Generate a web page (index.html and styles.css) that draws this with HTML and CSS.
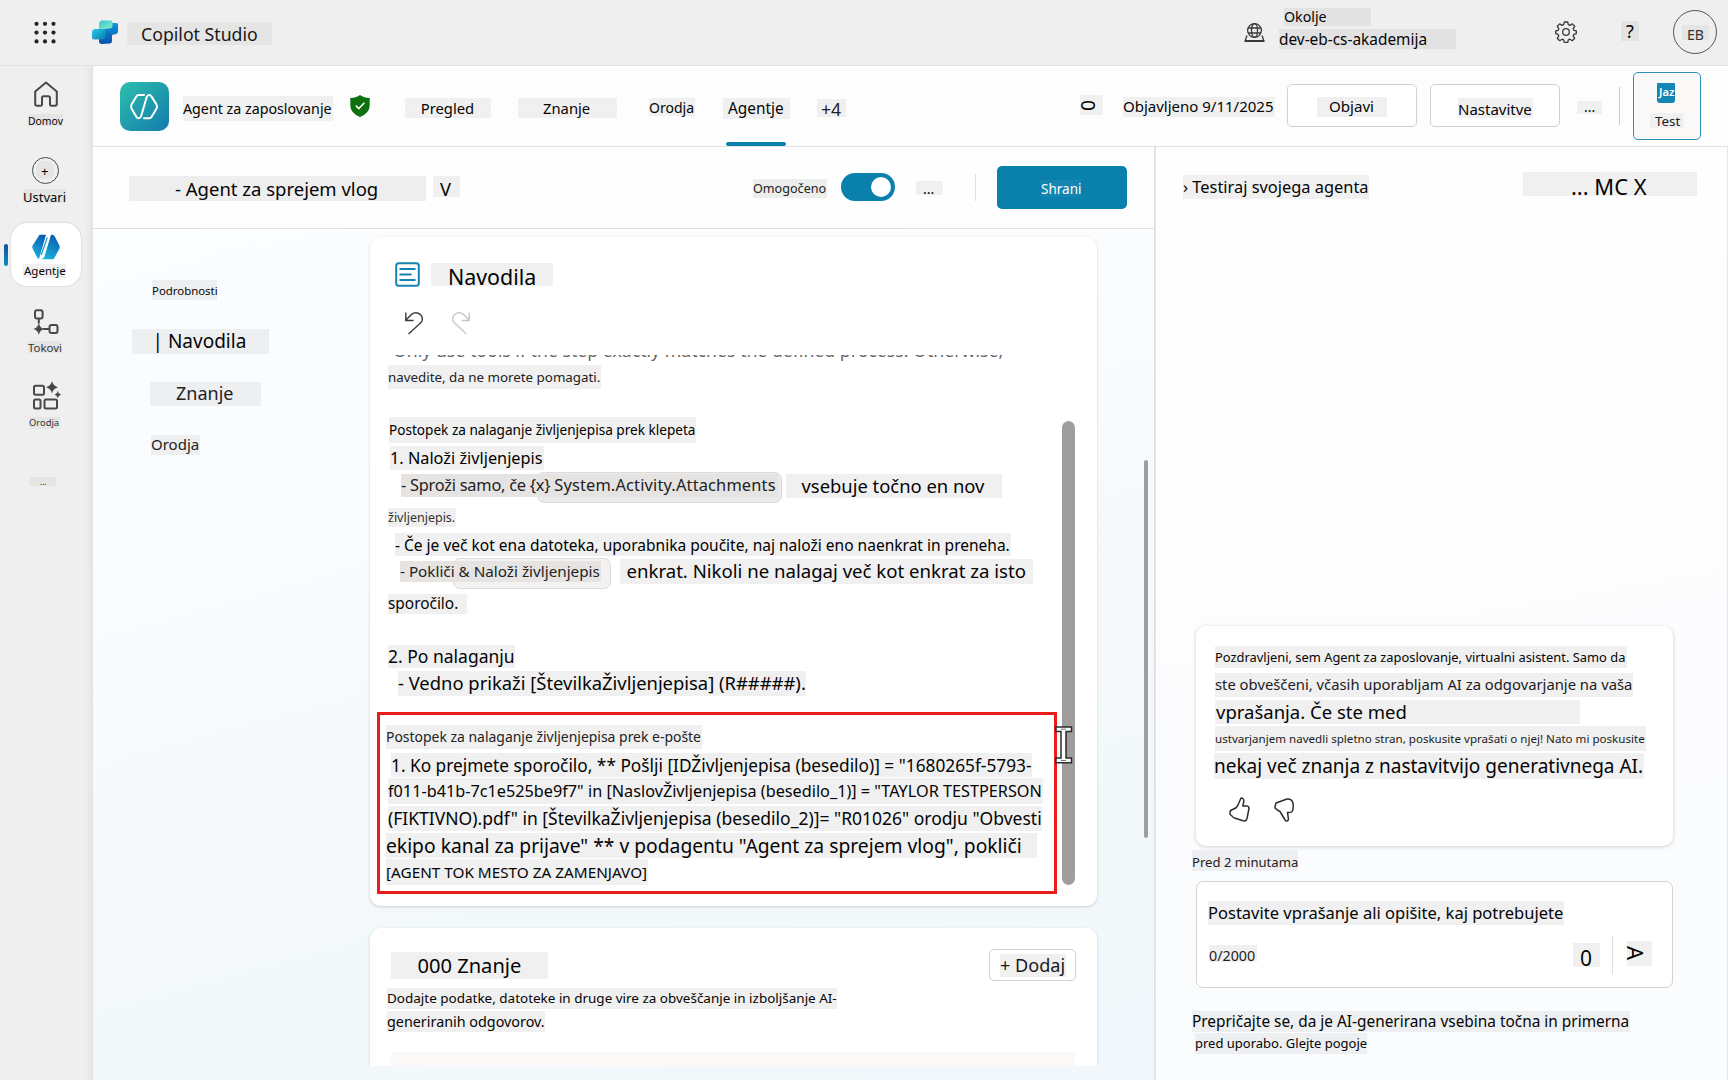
FILE: index.html
```html
<!DOCTYPE html>
<html lang="sl">
<head>
<meta charset="utf-8">
<title>Copilot Studio</title>
<link rel="stylesheet" href="styles.css">
</head>
<body>
<header class="topbar">
  <svg class="waffle" viewBox="0 0 22 24" fill="#242424"><circle cx="2.5" cy="2.8" r="2.1"/><circle cx="11" cy="2.8" r="2.1"/><circle cx="19.5" cy="2.8" r="2.1"/><circle cx="2.5" cy="11.6" r="2.1"/><circle cx="11" cy="11.6" r="2.1"/><circle cx="19.5" cy="11.6" r="2.1"/><circle cx="2.5" cy="20.4" r="2.1"/><circle cx="11" cy="20.4" r="2.1"/><circle cx="19.5" cy="20.4" r="2.1"/></svg>
  <svg class="brand-logo" viewBox="0 0 26 24">
    <defs>
      <linearGradient id="lg1" x1="0" y1="0" x2="1" y2="1"><stop offset="0" stop-color="#36c4d8"/><stop offset="1" stop-color="#8cf0c0"/></linearGradient>
      <linearGradient id="lg2" x1="0" y1="0" x2="1" y2="1"><stop offset="0" stop-color="#28c8e8"/><stop offset="1" stop-color="#0b7fae"/></linearGradient>
      <linearGradient id="lg3" x1="0" y1="0" x2="0" y2="1"><stop offset="0" stop-color="#1098e0"/><stop offset="1" stop-color="#0a4fa8"/></linearGradient>
    </defs>
    <path d="M18 3h6.5q1.500 0 1.500 1.500v7q0 2-2 2.500l-4 1v6q0 2-2 2.500l-8 .5q-3 0-3-2.500V13z" fill="url(#lg3)"/>
    <path d="M2.500 9h9.500q1.500 0 1.500 1.500v6.500q0 2-2 2.200L2 19.500q-2 0-2-2v-5.500q0-2.500 2.500-3z" fill="url(#lg2)"/>
    <path d="M10 .5h9q1.500 0 1.500 1.500v4q0 2-2 2.300L13.500 9H7V4q0-3 3-3.500z" fill="url(#lg1)"/>
  </svg>
  <span class="tag on-grey t-brand">Copilot Studio</span>
  <div class="top-right">
    <svg class="env-icon" viewBox="0 0 21 19" fill="none" stroke="#3a3a3a" stroke-width="1.300"><circle cx="10.500" cy="7.500" r="6.900"/><ellipse cx="10.500" cy="7.500" rx="3" ry="6.900"/><path d="M4 5h13M4 10h13M3 12.500L1 18.200h19l-2-5.700"/><path d="M1 18h19" stroke-width="2"/></svg>
    <div class="env">
      <span class="tag on-grey t-env1">Okolje</span>
      <span class="tag on-grey t-env2">dev-eb-cs-akademija</span>
    </div>
    <svg class="gear" viewBox="0 0 22 22" fill="none" stroke="#3a3a3a" stroke-width="1.300" stroke-linejoin="round"><circle cx="11" cy="11" r="3.300"/><path d="M9.300 1h3.400l.6 2.700 1.600.7 2.400-1.500 2.400 2.400-1.500 2.400.7 1.600 2.400.6v2.800l-2.400.6-.7 1.600 1.500 2.400-2.400 2.400-2.400-1.500-1.600.7-.6 2.600H9.300l-.6-2.600-1.600-.7-2.400 1.500-2.400-2.400 1.500-2.400-.7-1.600L.7 12.700V9.900l2.400-.6.7-1.600-1.500-2.400 2.400-2.400 2.400 1.500 1.600-.7z"/></svg>
    <span class="tag on-grey t-help">?</span>
    <div class="avatar"><span class="tag on-grey t-eb">EB</span></div>
  </div>
</header>

<div class="shell">
  <nav class="rail">
    <svg class="ic-home" viewBox="0 0 26 26" fill="none" stroke="#484848" stroke-width="2" stroke-linejoin="round"><path d="M2.200 10.500L13 1.500l10.800 9V23q0 1.800-1.800 1.800h-3.600q-1.400 0-1.400-1.400V17q0-1.800-1.800-1.800h-4.400Q9 15.200 9 17v6.400q0 1.400-1.400 1.400H4q-1.800 0-1.800-1.800z"/></svg>
    <span class="tag on-grey t-home">Domov</span>
    <div class="create"><span class="tag on-grey t-plus">+</span></div>
    <span class="tag on-grey t-create">Ustvari</span>
    <div class="rail-active">
      <svg class="ic-agents" viewBox="0 0 28 26">
        <defs><linearGradient id="ag" x1=".7" y1="0" x2=".3" y2="1"><stop offset="0" stop-color="#0b5cb0"/><stop offset="1" stop-color="#18b4dc"/></linearGradient></defs>
        <path d="M7.500.8H14L7 25q-1.500-.5-2.200-2L.6 14.500q-.6-1.500 0-3z" fill="url(#ag)"/>
        <path d="M14 25.200h6.500q1.200 0 1.900-1.200l5-9.500q.6-1.500 0-3L23 3Q22 .8 20 .8h-1L12.500 22.500q-.6 2.200-3.500 2.700z" fill="url(#ag)"/>
        <path d="M17.500 2L10 24" stroke="#fff" stroke-width="1.300"/><path d="M15.300 3.500L9.200 21" stroke="#18a0d8" stroke-width="1.200"/>
      </svg>
      <span class="tag t-agents">Agentje</span>
    </div>
    <svg class="ic-flows" viewBox="0 0 26 26" fill="none" stroke="#484848" stroke-width="2"><rect x="2" y="1.200" width="7.600" height="8.300" rx="2"/><rect x="16.500" y="16" width="8" height="8" rx="2"/><path d="M5.800 9.500v5M10 20h6.500"/><path d="M5.800 14q1 5 5.500 6-4.500 1-5.500 6-1-5-5.500-6 4.500-1 5.500-6z" fill="#484848" stroke="none"/></svg>
    <span class="tag on-grey t-flows">Tokovi</span>
    <svg class="ic-tools" viewBox="0 0 29 29" fill="none" stroke="#484848" stroke-width="2"><rect x="2" y="4.800" width="10" height="9" rx="1.500"/><rect x="2" y="18.500" width="6.500" height="9" rx="1.500"/><rect x="12.500" y="18.500" width="12.500" height="9" rx="1.500"/><path d="M20 0q1 5 6 6.200-5 1.300-6 6.300-1-5-6-6.300Q19 5 20 0zM25.800 10q.5 3 3.200 3.700-2.700.6-3.200 3.600-.5-3-3.200-3.600 2.700-.7 3.200-3.700z" fill="#484848" stroke="none"/></svg>
    <span class="tag on-grey t-tools">Orodja</span>
    <span class="tag on-grey t-more">...</span>
  </nav>

  <main class="main">
    <div class="agentbar">
      <svg class="agent-logo" viewBox="0 0 49 49">
        <defs><linearGradient id="al" x1="0" y1="0" x2="1" y2="1"><stop offset="0" stop-color="#2cc0ac"/><stop offset="1" stop-color="#1479ac"/></linearGradient></defs>
        <rect width="49" height="49" rx="10" fill="url(#al)"/>
        <path d="M24 13h-5.500q-1.300 0-2 1.200L11.500 22.500q-1 2 0 4L16.500 35q.8 1.400 2.200 1.200 1.800-.2 2.400-2L26.700 15q.7-2 2.500-2 1.400 0 2.200 1.400l5.200 8.200q1 2 0 4L31.500 35q-.8 1.300-2.300 1.300H24" fill="none" stroke="#fff" stroke-width="2" stroke-linecap="round" stroke-linejoin="round"/>
      </svg>
      <span class="tag t-agentname">Agent za zaposlovanje</span>
      <svg class="shield" viewBox="0 0 20 22"><path d="M10 0q4 3 9.700 3v7.500Q19.700 18 10 22 .3 18 .3 10.500V3Q6 3 10 0z" fill="#0e700e"/><path d="M5.800 10.600l3 3 5.600-5.800" fill="none" stroke="#fff" stroke-width="1.500"/></svg>
      <span class="tag t-tab1">Pregled</span>
      <span class="tag t-tab2">Znanje</span>
      <span class="tag t-tab3">Orodja</span>
      <span class="tag t-tab4">Agentje</span>
      <span class="tag t-tab5">+4</span>
      <span class="tag t-eye"><span class="turn">0</span></span>
      <span class="tag t-published">Objavljeno 9/11/2025</span>
      <div class="btn btn-publish"><span class="tag t-publish">Objavi</span></div>
      <div class="btn btn-settings"><span class="tag t-settings">Nastavitve</span></div>
      <span class="tag t-bardots">...</span>
      <i class="bar-rule"></i>
      <div class="btn-test"><span class="tag t-jaz">Jaz</span><span class="tag t-test">Test</span></div>
    </div>

    <div class="split">
      <section class="work">
        <div class="subbar">
          <span class="tag t-subname">- Agent za sprejem vlog</span>
          <span class="tag t-v">V</span>
          <span class="tag t-enabled">Omogočeno</span>
          <div class="toggle"><i></i></div>
          <span class="tag t-subdots">...</span>
          <i class="sub-rule"></i>
          <div class="btn-save"><span class="tag t-save">Shrani</span></div>
        </div>
        <div class="canvas">
          <div class="toc">
            <span class="tag on-blue t-toc1">Podrobnosti</span>
            <span class="tag on-blue t-toc2">| Navodila</span>
            <span class="tag on-blue t-toc3">Znanje</span>
            <span class="tag on-blue t-toc4">Orodja</span>
          </div>
          <div class="cards">
            <article class="card card-main">
              <div class="card-head">
                <svg class="ic-doc" viewBox="0 0 25 25" fill="none" stroke="#1485b0" stroke-width="2" stroke-linecap="round"><rect x="1.200" y="1.200" width="22.600" height="22.600" rx="2.500"/><path d="M5.200 7h14.600M5.200 12.500h10.600M5.200 18h14.600"/></svg>
                <span class="tag t-cardtitle">Navodila</span>
              </div>
              <div class="undo-row">
                <svg viewBox="0 0 18 23" fill="none" stroke="#3c3c3c" stroke-width="1.400"><path d="M.8.500v8h7.800M1 8l5.500-5.600Q11-1 15.500 2.600q3.500 4 .5 8L3.500 22"/></svg>
                <svg class="redo" viewBox="0 0 18 23" fill="none" stroke="#c8c8c8" stroke-width="1.400"><path d="M17.200.500v8H9.400M17 8l-5.500-5.600Q7-1 2.500 2.600q-3.500 4-.5 8L14.500 22"/></svg>
              </div>
              <div class="editor">
                <div class="lines">
                  <div class="cutoff"><span class="tag t-cut">Only use tools if the step exactly matches the defined process. Otherwise,</span></div>
                  <span class="tag t-l1">navedite, da ne morete pomagati.</span>
                  <span class="tag t-l2">Postopek za nalaganje življenjepisa prek klepeta</span>
                  <span class="tag t-l3">1. Naloži življenjepis</span>
                  <div class="row row-a">
                    <span class="tag chip t-l4"><span class="tight">- Sproži samo, če {x} </span><span class="loose">System.Activity.Attachments</span></span>
                    <span class="tag t-l4b">vsebuje točno en nov</span>
                  </div>
                  <span class="tag t-l5">življenjepis.</span>
                  <span class="tag t-l6">- Če je več kot ena datoteka, uporabnika poučite, naj naloži eno naenkrat in preneha.</span>
                  <div class="row row-b">
                    <span class="tag chip t-l7">- Pokliči &amp; Naloži življenjepis</span>
                    <span class="tag t-l7b">enkrat. Nikoli ne nalagaj več kot enkrat za isto</span>
                  </div>
                  <span class="tag t-l8">sporočilo.</span>
                  <span class="tag t-l9">2. Po nalaganju</span>
                  <span class="tag t-l10">- Vedno prikaži [ŠtevilkaŽivljenjepisa] (R#####).</span>
                  <div class="marked">
                    <span class="tag t-m1">Postopek za nalaganje življenjepisa prek e-pošte</span>
                    <span class="tag t-m2">1. Ko prejmete sporočilo, ** Pošlji [IDŽivljenjepisa (besedilo)] = "1680265f-5793-</span>
                    <span class="tag t-m3">f011-b41b-7c1e525be9f7" in [NaslovŽivljenjepisa (besedilo_1)] = "TAYLOR TESTPERSON</span>
                    <span class="tag t-m4">(FIKTIVNO).pdf" in [ŠtevilkaŽivljenjepisa (besedilo_2)]= "R01026" orodju "Obvesti</span>
                    <span class="tag t-m5">ekipo kanal za prijave" ** v podagentu "Agent za sprejem vlog", pokliči</span>
                    <span class="tag t-m6">[AGENT TOK MESTO ZA ZAMENJAVO]</span>
                  </div>
                </div>
                <i class="thumb"></i>
                <svg class="ibeam" viewBox="0 0 18 38"><path d="M1 1h15.500v4.500H11V32h5.500v4.800H1V32h5V5.500H1z" fill="#fff" stroke="#2a2a2a" stroke-width="1.500"/><path d="M6 3.200h5M6 34.500h5" stroke="#777" stroke-width="1"/></svg>
              </div>
            </article>
            <article class="card card-know">
              <div class="know-head">
                <span class="tag t-know">000 Znanje</span>
                <div class="btn-add"><span class="tag t-add">+ Dodaj</span></div>
              </div>
              <span class="tag t-k1">Dodajte podatke, datoteke in druge vire za obveščanje in izboljšanje AI-</span>
              <span class="tag t-k2">generiranih odgovorov.</span>
              <div class="know-strip"></div>
            </article>
          </div>
          <i class="page-thumb"></i>
        </div>
      </section>

      <aside class="chat">
        <div class="chat-head">
          <span class="tag t-chat">› Testiraj svojega agenta</span>
          <span class="tag t-mcx">... MC X</span>
        </div>
        <div class="bubble">
          <span class="tag t-b1">Pozdravljeni, sem Agent za zaposlovanje, virtualni asistent. Samo da</span>
          <span class="tag t-b2">ste obveščeni, včasih uporabljam AI za odgovarjanje na vaša</span>
          <span class="tag t-b3">vprašanja. Če ste med</span>
          <span class="tag t-b4">ustvarjanjem navedli spletno stran, poskusite vprašati o njej! Nato mi poskusite</span>
          <span class="tag t-b5">nekaj več znanja z nastavitvijo generativnega AI.</span>
          <div class="votes">
            <svg viewBox="0 0 21 25" fill="none" stroke="#2e2e2e" stroke-width="1.500" stroke-linejoin="round"><path d="M12 1q3 0 2.800 3.500L13.800 9h4.400q2 .3 1.800 2.500L18 21.500q-.8 3-4 2.300L5.500 21Q4 20.500 3.500 19.500L1.200 17.500Q.2 13.500 3.500 12.500 7.500 11.500 9 8z"/></svg>
            <svg class="down" viewBox="0 0 20 24" fill="none" stroke="#2e2e2e" stroke-width="1.500" stroke-linejoin="round"><path d="M2 5Q1 8 1 10q2 2 5 3.500L10.500 21q.8 2.300 2.500 2 1.700-.3 1.300-3L13.500 14.500q4 .5 5-1.500 1.200-4 .3-8.500Q17.500.5 13 1z"/></svg>
          </div>
        </div>
        <span class="tag on-blue t-time">Pred 2 minutama</span>
        <div class="ask">
          <span class="tag t-ask">Postavite vprašanje ali opišite, kaj potrebujete</span>
          <div class="ask-row">
            <span class="tag t-count">0/2000</span>
            <span class="tag t-mic">0</span>
            <i class="ask-rule"></i>
            <span class="tag t-send"><span class="turn">A</span></span>
          </div>
        </div>
        <span class="tag on-blue t-n1">Prepričajte se, da je AI-generirana vsebina točna in primerna</span>
        <span class="tag on-blue t-n2">pred uporabo. Glejte pogoje</span>
      </aside>
    </div>
  </main>
</div>
</body>
</html>
```
FILE: styles.css
```css
* { box-sizing: border-box; }
body {
  margin: 0; width: 1728px; height: 1080px; overflow: hidden;
  background: #efefef; color: #050505;
  font-family: "Noto Sans", "Open Sans", sans-serif;
}
svg { display: block; flex: none; }
i { display: block; flex: none; }

/* Text label: --w/--h box, --f font size, --b baseline from the top, --p inset */
.tag {
  --p: 0px;
  display: block; flex: none;
  width: var(--w); height: var(--h); padding-left: var(--p);
  font-size: var(--f);
  line-height: calc(2 * (var(--b) + .7px - .388em));
  white-space: pre;
  background: #f0f0f0;
}
.on-grey { background: #e5e5e5; }
.on-blue { background: #eeeff1; }
.turn { display: block; transform: rotate(90deg); }
.tight { letter-spacing: -.25px; }
.loose { letter-spacing: .16px; }

/* top bar */
.topbar { display: flex; align-items: flex-start; height: 66px; border-bottom: 1px solid #e2e2e2; padding-left: 34px; }
.waffle { width: 22px; height: 24px; margin-top: 21px; }
.brand-logo { width: 26px; height: 24px; margin: 20px 0 0 36px; }
.t-brand { --w: 145px; --h: 23px; --f: 17.7px; --b: 18.5px; --p: 14px; margin: 22px 0 0 9px; color: #1a1a1a; }
.top-right { display: flex; align-items: flex-start; margin-left: auto; padding-right: 10px; }
.env-icon { width: 21px; height: 19px; margin: 23px 14px 0 0; }
.env { width: 276px; padding-top: 8px; }
.t-env1 { --w: 87px; --h: 18px; --f: 14.2px; --b: 13.600px; margin-left: 5px; background: #e1e2e1; }
.t-env2 { --w: 177px; --h: 20px; --f: 15.4px; --b: 16px; margin-top: 3px; background: #e2e2e2; }
.gear { width: 22px; height: 22px; margin-top: 21px; }
.t-help { --w: 18px; --h: 20px; --f: 18px; --b: 17px; --p: 5px; margin: 21px 0 0 44px; background: #e2e3e2; }
.avatar { width: 44px; height: 44px; margin: 10px 1px 0 34px; border: 1.500px solid #555; border-radius: 50%; padding: 14px 0 0 8px; }
.t-eb { --w: 27px; --h: 15px; --f: 14.1px; --b: 14.300px; --p: 5px; color: #333; }

/* left rail */
.shell { display: flex; height: 1014px; }
.rail { display: flex; flex-direction: column; align-items: flex-start; width: 92px; flex: none; background: linear-gradient(90deg, #efefef 84px, #e6e6e6); }
.ic-home { width: 26px; height: 26px; margin: 15px 0 0 33px; }
.t-home { --w: 35px; --h: 12px; --f: 10.4px; --b: 11px; margin: 7px 0 0 28px; }
.create { width: 27px; height: 27px; margin: 31px 0 0 32px; border: 1.500px solid #484848; border-radius: 50%; padding: 3px 0 0 3px; }
.t-plus { --w: 18px; --h: 18px; --f: 13px; --b: 15px; --p: 5px; border-radius: 6px; }
.t-create { --w: 43px; --h: 14px; --f: 13px; --b: 13px; margin: 5px 0 0 23px; }
.rail-active { position: relative; width: 70px; height: 63px; margin: 20px 0 0 11px; padding-top: 11px; background: #fff; border-radius: 16px; box-shadow: 0 0 2px rgba(0,0,0,.2); }
.rail-active::before { content: ""; position: absolute; left: -7px; top: 21px; width: 4px; height: 22px; border-radius: 2px; background: linear-gradient(#0f4f9c, #1090c8); }
.ic-agents { width: 28px; height: 26px; margin-left: 21px; }
.t-agents { --w: 43px; --h: 14px; --f: 11.5px; --b: 10.500px; --p: 1px; margin: 4px 0 0 12px; }
.ic-flows { width: 26px; height: 26px; margin: 23px 0 0 33px; }
.t-flows { --w: 33px; --h: 12px; --f: 11.4px; --b: 10.5px; margin: 6px 0 0 28px; color: #333; }
.ic-tools { width: 29px; height: 29px; margin: 28px 0 0 32px; }
.t-tools { --w: 31px; --h: 12px; --f: 9.4px; --b: 8.500px; margin: 7px 0 0 29px; color: #333; }
.t-more { --w: 26px; --h: 9px; --f: 8px; --b: 7px; --p: 10px; margin: 48px 0 0 30px; }

/* agent bar */
.main { width: 1636px; flex: none; display: flex; flex-direction: column; border-left: 1px solid #e2e2e2; background: #fdfdfd; }
.agentbar { position: relative; display: flex; align-items: flex-start; height: 81px; flex: none; border-bottom: 1px solid #e3e3e3; padding-left: 27px; }
.agentbar > .tag { margin-top: 32px; }
.agent-logo { width: 49px; height: 49px; margin-top: 16px; }
.agentbar > .t-agentname { --w: 150px; --h: 25px; --f: 14.25px; --b: 17.600px; margin: 30px 0 0 14px; }
.shield { width: 20px; height: 22px; margin: 29px 0 0 17px; }
.agentbar > .t-tab1 { --w: 86px; --h: 20px; --f: 14.8px; --b: 15.700px; --p: 15.700px; margin-left: 35px; }
.agentbar > .t-tab2 { --w: 99px; --h: 20px; --f: 14.8px; --b: 15.700px; --p: 25px; margin-left: 27px; }
.agentbar > .t-tab3 { --w: 46px; --h: 18px; --f: 14px; --b: 14.500px; margin-left: 32px; }
.agentbar > .t-tab4 { --w: 67px; --h: 21px; --f: 15.4px; --b: 16.300px; --p: 5px; margin-left: 28px; position: relative; }
.t-tab4::after { content: ""; position: absolute; left: 3px; top: 44px; width: 60px; height: 4px; border-radius: 2px; background: #0a80ad; }
.agentbar > .t-tab5 { --w: 29px; --h: 18px; --f: 17.6px; --b: 16.700px; --p: 4px; margin: 33px 0 0 27px; color: #222; }
.agentbar > .t-eye { --w: 23px; --h: 20px; --f: 19px; --b: 20px; margin: 29px 0 0 234px; }
.t-eye .turn { width: 16px; height: 20px; line-height: 20px; padding-left: 3px; }
.agentbar > .t-published { --w: 152px; --h: 20px; --f: 15px; --b: 14.300px; margin: 31px 0 0 20px; }
.btn { height: 43px; border: 1px solid #d1d1d1; border-radius: 5px; background: #fff; margin-top: 18px; }
.btn-publish { width: 130px; margin-left: 12px; padding: 12px 0 0 29px; }
.t-publish { --w: 70px; --h: 20px; --f: 15.1px; --b: 14.800px; --p: 12px; }
.btn-settings { width: 130px; margin-left: 13px; padding: 13px 0 0 27px; }
.t-settings { --w: 75px; --h: 20px; --f: 15px; --b: 17px; }
.agentbar > .t-bardots { --w: 25px; --h: 13px; --f: 14px; --b: 11px; --p: 7px; margin: 35px 0 0 17px; }
.bar-rule { width: 1px; height: 38px; margin: 21px 0 0 17px; background: #ccc; }
.btn-test { width: 68px; height: 68px; margin: 6px 0 0 13px; border: 1.500px solid #2a90b8; border-radius: 5px; background: #faf9f8; }
.t-jaz { --w: 18px; --h: 20px; --f: 11.1px; --b: 12.800px; --p: 2px; margin: 10px 0 0 23px; background: #1485b4; color: #fff; font-weight: 600; border-radius: 1px 1px 3px 3px; }
.t-test { --w: 34px; --h: 15px; --f: 13.4px; --b: 13.300px; --p: 5px; margin: 10px 0 0 16px; color: #222; }

/* work area */
.split { display: flex; height: 933px; }
.work { width: 1062px; flex: none; display: flex; flex-direction: column; border-right: 1px solid #dcdfe2; }
.subbar { display: flex; align-items: flex-start; height: 82px; flex: none; border-bottom: 1.500px solid #e0e0e0; padding-left: 36px; background: #fefefe; }
.t-subname { --w: 297px; --h: 25px; --f: 18.500px; --b: 19px; --p: 46px; margin-top: 29px; background: #eee; }
.t-v { --w: 27px; --h: 21px; --f: 18.300px; --b: 19px; --p: 7px; margin: 29px 0 0 7px; }
.t-enabled { --w: 74px; --h: 19px; --f: 12.6px; --b: 14px; margin: 32px 0 0 293px; background: #eceeec; color: #222; }
.toggle { width: 54px; height: 28px; margin: 26px 0 0 14px; padding: 4px 0 0 30px; border-radius: 14px; background: #0a80ad; flex: none; }
.toggle i { width: 20px; height: 20px; border-radius: 50%; background: #fff; }
.t-subdots { --w: 27px; --h: 14px; --f: 14px; --b: 12.500px; --p: 7px; margin: 34px 0 0 21px; }
.sub-rule { width: 1px; height: 27px; margin: 27px 0 0 32px; background: #e0e0e0; }
.btn-save { width: 130px; height: 43px; margin: 19px 0 0 21px; padding: 14px 0 0 44px; border-radius: 5px; background: #0a80ad; flex: none; }
.t-save { --w: 40px; --h: 17px; --f: 13.500px; --b: 14.500px; background: #1485b1; color: #fff; }

.canvas { display: flex; align-items: flex-start; height: 851px; background: linear-gradient(165deg, #fcfdfe 0%, #f9fbfd 35%, #f3f8fb 70%, #f2f7fb 100%); }
.toc { display: flex; flex-direction: column; align-items: flex-start; width: 277px; flex: none; padding-top: 51px; }
.t-toc1 { --w: 65px; --h: 20px; --f: 11.4px; --b: 14.800px; margin-left: 59px; }
.t-toc2 { --w: 137px; --h: 25px; --f: 19px; --b: 19.500px; --p: 20.500px; margin: 29px 0 0 39px; }
.t-toc3 { --w: 111px; --h: 24px; --f: 18px; --b: 18px; --p: 26px; margin: 28px 0 0 57px; color: #222; }
.t-toc4 { --w: 49px; --h: 20px; --f: 15px; --b: 15px; margin: 29px 0 0 58px; color: #222; }

.cards { width: 727px; height: 829px; flex: none; overflow: hidden; padding: 8px 4px 0; margin: 0 -4px; box-sizing: content-box; }
.card { width: 727px; background: #fff; border-radius: 11px; box-shadow: 0 1px 3px rgba(0,20,30,.18); }
.card-main { height: 669px; }
.card-head { display: flex; padding: 25px 0 0 25px; }
.ic-doc { width: 25px; height: 25px; }
.t-cardtitle { --w: 122px; --h: 23px; --f: 21.400px; --b: 22px; --p: 17px; margin: 1px 0 0 11px; }
.undo-row { display: flex; gap: 29px; padding: 25px 0 0 35px; }
.undo-row svg { width: 18px; height: 23px; }
.editor { position: relative; display: flex; align-items: flex-start; margin-top: 20px; }
.lines { width: 692px; flex: none; display: flex; flex-direction: column; align-items: flex-start; }
.lines > .tag, .row { margin-left: 18px; }
.cutoff { height: 8px; margin-left: 23px; overflow: hidden; }
.t-cut { --w: 612px; --h: 30px; --f: 17.7px; --b: 21.300px; margin-top: -20px; background: none; color: #666; }
.t-l1 { --w: 213px; --h: 24px; --f: 13.35px; --b: 17px; margin-top: 2px; color: #222; }
.lines > .t-l2 { --w: 307px; --h: 26px; --f: 13.6px; --b: 17.800px; margin: 28px 0 0 19px; color: #000; }
.lines > .t-l3 { --w: 154px; --h: 24px; --f: 16.300px; --b: 18px; margin: 3px 0 0 20px; color: #000; }
.row { display: flex; align-items: flex-start; isolation: isolate; }
.chip { position: relative; background: #e5e4e3; color: #222; }
.chip::before { content: ""; position: absolute; z-index: -1; border: 1px solid #dcdcdc; border-radius: 7px; background: #f3f2f1; }
.row-a { height: 24px; margin-top: 4px; }
.row-a .chip::before { left: 136px; top: -2px; width: 244px; height: 29px; background: #ebeae9; }
.t-l4 { --w: 377px; --h: 23px; --f: 16.4px; --b: 17px; margin-left: 13px; }
.row-a .chip::before { width: 243px; }
.t-l4b { --w: 216px; --h: 24px; --f: 18.4px; --b: 18px; --p: 15.500px; margin-left: 8px; }
.t-l5 { --w: 68px; --h: 19px; --f: 12.500px; --b: 14px; margin-top: 10px; color: #333; }
.lines > .t-l6 { --w: 616px; --h: 23px; --f: 15.520px; --b: 17.800px; margin: 6px 0 0 25px; color: #000; }
.row-b { height: 25px; margin-top: 3px; }
.row-b .chip::before { left: 53px; top: -3px; width: 156px; height: 29px; }
.t-l7 { --w: 201px; --h: 21px; --f: 15.250px; --b: 15.300px; margin: 2px 0 0 12px; }
.t-l7b { --w: 413px; --h: 25px; --f: 18.6px; --b: 18.600px; --p: 6.500px; margin-left: 19px; }
.t-l8 { --w: 79px; --h: 20px; --f: 15.400px; --b: 15.500px; margin-top: 10px; }
.t-l9 { --w: 127px; --h: 23px; --f: 17.500px; --b: 17.300px; margin-top: 31px; }
.lines > .t-l10 { --w: 408px; --h: 25px; --f: 18.4px; --b: 18.600px; margin: 3px 0 0 28px; }
.marked { width: 680px; height: 182px; margin: 16px 0 0 7px; border: 3px solid #eb1c1c; padding-top: 10px; }
.marked .tag { margin-left: 6px; }
.t-m1 { --w: 316px; --h: 24px; --f: 13.950px; --b: 16.800px; color: #222; }
.marked .t-m2 { --w: 641px; --h: 24px; --f: 17.280px; --b: 18.800px; margin: 4px 0 0 11px; }
.marked .t-m3 { --w: 655px; --h: 26px; --f: 16.240px; --b: 19px; margin: 1px 0 0 8px; }
.marked .t-m4 { --w: 654px; --h: 25px; --f: 17.500px; --b: 18.300px; margin: 2px 0 0 8px; }
.marked .t-m5 { --w: 651px; --h: 25px; --f: 19.280px; --b: 19.300px; margin-top: 2px; }
.marked .t-m6 { --w: 262px; --h: 26px; --f: 15.300px; --b: 19px; margin-top: 1px; }
.thumb { width: 13px; height: 464px; margin-top: 66px; border-radius: 7px; background: #a09e9c; }
.ibeam { position: absolute; left: 685px; top: 371px; width: 18px; height: 38px; }

.card-know { height: 160px; margin-top: 22px; display: flex; flex-direction: column; align-items: flex-start; padding-top: 21px; }
.know-head { display: flex; justify-content: space-between; align-items: flex-start; width: 706px; padding-left: 21px; height: 32px; }
.t-know { --w: 157px; --h: 27px; --f: 20.1px; --b: 21px; --p: 26.500px; margin-top: 3px; }
.btn-add { width: 87px; height: 32px; border: 1px solid #d1d1d1; border-radius: 5px; padding: 4px 0 0 10px; }
.t-add { --w: 66px; --h: 23px; --f: 18.1px; --b: 18px; color: #1a1a1a; }
.t-k1 { --w: 450px; --h: 21px; --f: 13.470px; --b: 15.500px; margin: 7px 0 0 17px; }
.t-k2 { --w: 158px; --h: 21px; --f: 14.350px; --b: 15.500px; margin: 2px 0 0 17px; }
.know-strip { width: 684px; height: 20px; margin: 20px 0 0 21px; background: #faf9f8; }
.page-thumb { width: 4px; height: 378px; margin: 231px 0 0 47px; border-radius: 2px; background: #a09e9c; }

/* test chat */
.chat { width: 573px; flex: none; display: flex; flex-direction: column; align-items: flex-start; border-left: 1px solid #e6e8ea; border-right: 1px solid #e6e8ea; background: linear-gradient(170deg, #fefefe 0%, #fdfdfe 40%, #fbfcfe 75%); }
.chat-head { display: flex; width: 100%; padding-left: 27px; height: 479px; }
.t-chat { --w: 186px; --h: 24px; --f: 16.4px; --b: 17.300px; margin-top: 28px; }
.t-mcx { --w: 174px; --h: 24px; --f: 21.9px; --b: 22.600px; --p: 48px; margin: 25px 0 0 154px; }
.bubble { width: 477px; height: 220px; margin-left: 40px; border-radius: 10px; background: #fff; box-shadow: 0 1px 4px rgba(0,0,0,.18); padding: 20px 0 0 19px; }
.t-b1 { --w: 412px; --h: 22px; --f: 12.9px; --b: 15.800px; }
.t-b2 { --w: 418px; --h: 24px; --f: 14.8px; --b: 16.300px; margin-top: 5px; color: #1c1c1c; }
.t-b3 { --w: 365px; --h: 24px; --f: 18.500px; --b: 18.500px; --p: 1px; margin-top: 3px; }
.t-b4 { --w: 431px; --h: 25px; --f: 11.58px; --b: 16.300px; margin-top: 2px; color: #1c1c1c; }
.t-b5 { --w: 430px; --h: 26px; --f: 19px; --b: 20px; margin: 2px 0 0 -1px; }
.votes { display: flex; gap: 24px; padding: 18px 0 0 14px; }
.votes svg { width: 21px; height: 25px; }
.votes .down { width: 20px; height: 24px; margin-top: 1px; }
.t-time { --w: 106px; --h: 21px; --f: 13.1px; --b: 17px; margin: 4px 0 0 36px; color: #222; }
.ask { width: 477px; height: 107px; margin: 10px 0 0 40px; border: 1px solid #d1d3d5; border-radius: 7px; background: #fff; padding: 19px 0 0 11px; }
.t-ask { --w: 356px; --h: 24px; --f: 16.530px; --b: 17.300px; }
.ask-row { display: flex; align-items: flex-start; padding-top: 11px; }
.t-count { --w: 48px; --h: 17px; --f: 14.300px; --b: 16px; margin: 9px 0 0 1px; color: #222; }
.t-mic { --w: 27px; --h: 24px; --f: 21px; --b: 22.500px; --p: 7px; margin: 7px 0 0 316px; }
.ask-rule { width: 1px; height: 38px; margin-left: 12px; background: #ddd; }
.t-send { --w: 25px; --h: 25px; --f: 22px; --b: 20px; margin: 5px 0 0 14px; }
.t-send .turn { width: 15px; height: 25px; line-height: 25px; margin-left: 1px; transform-origin: 50% 50%; }
.t-n1 { --w: 438px; --h: 21px; --f: 15.4px; --b: 16px; margin: 23px 0 0 36px; }
.t-n2 { --w: 172px; --h: 21px; --f: 13px; --b: 15.300px; margin: 1px 0 0 39px; }
```
